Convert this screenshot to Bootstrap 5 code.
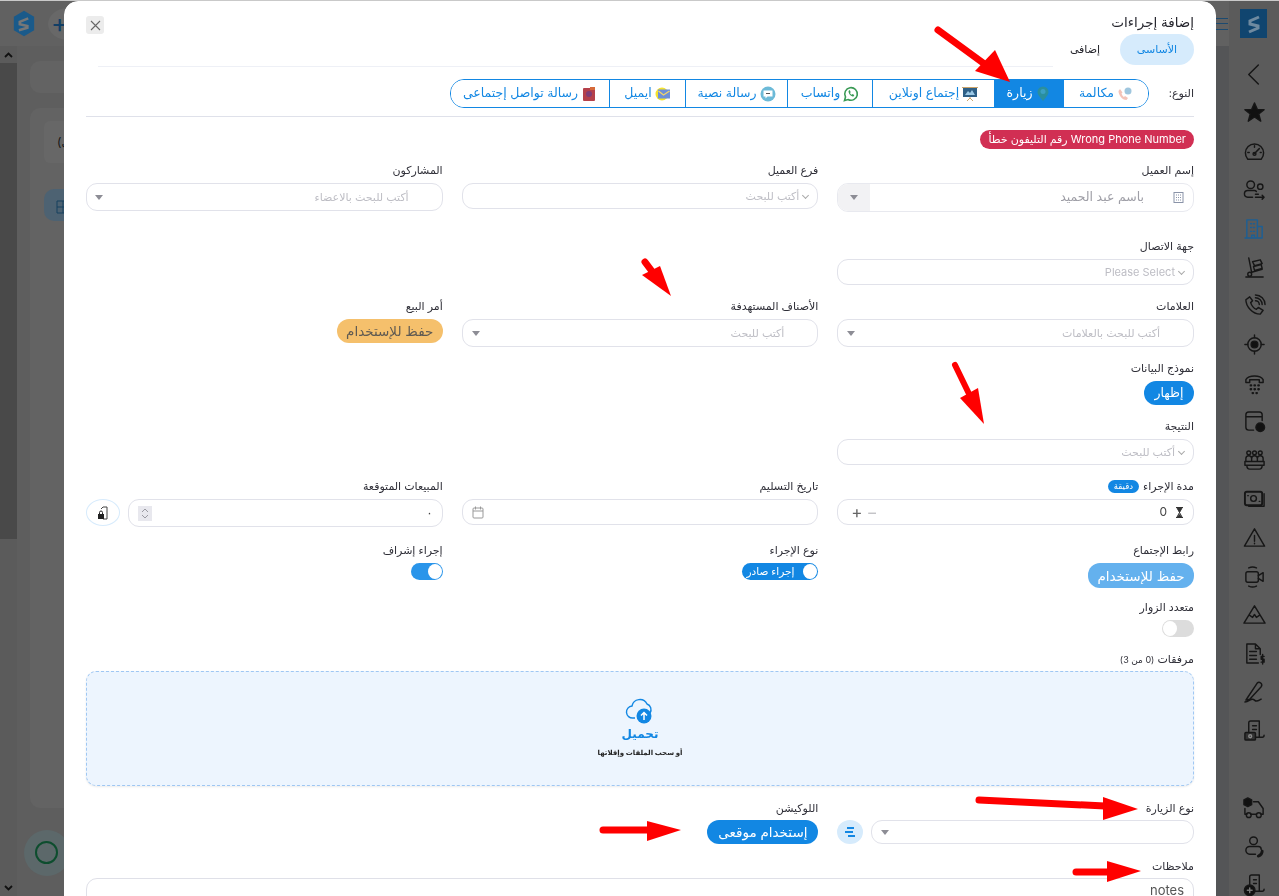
<!DOCTYPE html>
<html lang="ar" dir="rtl">
<head>
    <meta charset="UTF-8">
    <meta name="viewport" content="width=device-width, initial-scale=1.0">
    <title>إضافة إجراءات</title>
    <link href="https://cdn.jsdelivr.net/npm/bootstrap@5.3.3/dist/css/bootstrap.min.css" rel="stylesheet">
    <style>
        body { overflow: hidden; height: 896px; background: #5b5b5b; border-top: 1px solid #c9c9c9; font-family: "Inter", "DejaVu Sans", sans-serif; font-size: 11px; color: #2f2f38; }

        /* dimmed page behind the dialog */
        .page-shell { height: 895px; }
        .rail { width: 50px; flex: none; background: #5b5b5b; padding-top: 8px; }
        .rail-logo { width: 27px; height: 29px; background: #10456f; margin: 0 12px 17px 11px; }
        .rail-item { height: 38.6px; }
        .rail-item svg { width: 23px; height: 23px; fill: none; stroke: #161616; stroke-width: 1.5; stroke-linecap: round; stroke-linejoin: round; }
        .bg-main { flex: 1; min-width: 0; background: #5e5e5e; }
        .bg-head { height: 45px; background: #616161; padding-left: 13px; gap: 13px; }
        .bg-burger { position: absolute; left: 1216px; top: 18px; width: 12px; height: 12px; border-top: 1px solid #1c4a70; border-bottom: 1px solid #1c4a70; }
        .bg-burger::after { content: ""; display: block; height: 1px; margin-top: 4px; background: #1c4a70; }
        .bg-plus { width: 40px; height: 32px; border-radius: 50%; background: #686868; color: #123f66; font-size: 26px; line-height: 30px; padding-left: 3px; }
        .scroll-strip { width: 17px; flex: none; background: #5b5b5b; height: 850px; }
        .scroll-thumb { height: 476px; background: #494949; }
        .scroll-ch { height: 17px; }
        .bg-gutter { width: 13px; flex: none; background: #545557; }
        .bg-card { background: #636363; border-radius: 10px; margin: 15px 0 8px 13px; height: 32px; }
        .bg-card-b { height: 700px; padding: 13px 0 0 14px; }
        .bg-inner { height: 42px; border-radius: 6px 0 0 6px; background: #676767; color: #151515; font-size: 12px; padding: 12px 0 0 13px; }
        .bg-grid { width: 40px; height: 32px; margin-top: 26px; border-radius: 10px; background: #4d6272; padding: 9px 0 0 12px; }
        .bg-fab { position: absolute; left: 24px; top: 830px; width: 46px; height: 46px; border-radius: 50%; background: #5c686a; }
        .bg-fab::after { content: ""; position: absolute; left: 11px; top: 11px; width: 23px; height: 23px; border-radius: 50%; border: 2.5px solid #0d4d2e; }

        /* dialog */
        .dlg-layer { position: fixed; left: 64px; top: 1px; width: 1152px; height: 895px; z-index: 1055; overflow: hidden; border-radius: 14px 14px 0 0; }
        .act-content { height: 960px; border: 0; border-radius: 14px; padding: 11px 22px 0; overflow: hidden; background: #fff; }
        .act-title { font-size: 13.5px; font-weight: 500; line-height: 20px; color: #26262e; height: 22px; }
        .act-close { width: 18px; height: 18px; background: #ececec; border-radius: 3px; margin-top: 4px; color: #555; }
        .act-tabs { height: 32px; gap: 0; border-bottom: 0; padding-right: 0; }
        .act-tabs .nav-link { padding: 0 0; height: 31px; line-height: 31px; border-radius: 16px; font-size: 11px; color: #25252c; width: 74px; text-align: center; border: 0; }
        .act-tabs .nav-link.active { background: #d6ebfc; color: #1287e3; }
        .act-tabs .nav-link.second { width: 70px; }
        .act-rule { height: 1px; background: #eef0f6; margin: 0 141px 0 12px; }
        .type-row { height: 29px; margin-top: 12px; }
        .type-label { width: 45px; font-size: 11px; }
        .type-group { width: 699px; height: 29px; border: 1px solid #1287e3; border-radius: 14px; overflow: hidden; }
        .type-btn { height: 100%; font-size: 12.5px; line-height: 1; color: #1287e3; background: #fff; border: 0; border-left: 1px solid #1287e3; gap: 3px; padding: 0; border-radius: 0; }
        .type-btn:last-child { border-left: 0; }
        .type-btn.on { background: #1287e3; color: #fff; }
        .type-btn svg { width: 16px; height: 16px; flex: none; }
        .w-85 { width: 85px; } .w-69 { width: 69px; } .w-122 { width: 122px; } .w-102 { width: 102px; } .w-76 { width: 76px; } .w-fill { flex: 1; }
        .type-rule { height: 1px; background: #dfe1ea; margin-top: 8px; }
        .warn-pill { height: 19px; line-height: 19px; padding: 0 8px; margin-top: 13px; margin-bottom: 13px; border-radius: 10px; background: #d12f53; color: #fff; font-size: 11px; }

        .fld-row { --bs-gutter-x: 19px; margin-bottom: 13px; }
        .fld-row.gap-26 { margin-bottom: 26px; }
        .fld-row.gap-14 { margin-bottom: 14px; }
        .fld-row.gap-15 { margin-bottom: 15px; }
        .fld-row.gap-11 { margin-bottom: 11px; }
        .fld-label { display: block; height: 16px; line-height: 16px; margin-bottom: 5px; font-size: 11px; color: #2f2f38; white-space: nowrap; }
        .fld-label.tight { margin-bottom: 4px; }
        .att-count { font-size: 9px; }
        .fld-box { height: 26px; padding: 0 9px; border: 1px solid #e1e2ea; border-radius: 11px; background: #fff; color: #bdbdc4; font-size: 11px; }
        .h-24 { height: 24px; } .h-28 { height: 28px; }
        .caret-down { width: 0; height: 0; border: 4px solid transparent; border-top: 5px solid #8d8d95; border-bottom: 0; }
        .chev-down { width: 5px; height: 5px; border-left: 1px solid #aaa; border-bottom: 1px solid #aaa; transform: rotate(-45deg); margin-bottom: 2px; flex: none; }
        .client-box { height: 29px; border: 1px solid #e8e9ef; border-radius: 11px; overflow: hidden; color: #9e9ea6; font-size: 12.5px; }
        .client-end { width: 32px; background: #f2f2f4; }
        .pill-btn { height: 24px; line-height: 24px; padding: 0; border: 0; border-radius: 12px; font-size: 13.5px; }
        .pill-amber { width: 106px; background: #f5c06c; color: #5f5a52; }
        .pill-blue { background: #1287e3; color: #fff; }
        .pill-pale { width: 106px; height: 25px; background: #64b1ee; color: #fff; }
        .w-50px { width: 50px; font-size: 12.5px; } .w-111 { width: 111px; }
        .unit-badge { height: 13px; line-height: 13px; padding: 0 6px; border-radius: 7px; background: #1287e3; color: #fff; font-size: 8.5px; font-weight: 400; }
        .dur-value { color: #444; font-size: 12px; }
        .step-sign { font-size: 17px; line-height: 1; color: #666; }
        .step-sign.off { color: #c4c4c8; }
        .spin-box { width: 14px; height: 15px; background: #e8e8ee; color: #9a9aa2; flex: none; }
        .lock-btn { width: 34px; height: 27px; flex: none; border: 1px solid #d7ebfc; border-radius: 50%; background: #fff; padding: 0; }
        .sw-track { height: 17px; border-radius: 9px; padding: 0; border: 0; display: flex; }
        .sw-knob { width: 14px; height: 15px; margin: 1px; border-radius: 50%; background: #fff; flex: none; }
        .sw-on { width: 32px; background: #2a95ea; }
        .sw-off { width: 32px; background: #dcdcdc; justify-content: flex-end; }
        .sw-wide { width: 76px; background: #1287e3; color: #fff; font-size: 10.5px; line-height: 17px; gap: 8px; }
        .drop-zone { height: 115px; margin-bottom: 14px; border: 1px dashed #9fc7f3; border-radius: 10px; background: #edf5fe; box-shadow: 0 1px 2px rgba(0,0,0,.08); }
        .drop-title { font-size: 12px; font-weight: 700; color: #1287e3; line-height: 16px; margin-top: 2px; }
        .drop-sub { font-size: 7px; font-weight: 700; color: #222; line-height: 12px; margin-top: 5px; }
        .round-btn { width: 26px; height: 24px; flex: none; border: 0; padding: 0; border-radius: 50%; background: #d6ebfc; }
        .notes-box { height: 50px; padding: 2px 9px; border: 1px solid #dfe0e8; border-radius: 11px; font-size: 13px; color: #555; width: 100%; resize: none; outline: 0; font-family: inherit; display: block; }
        .arrow-layer { position: absolute; left: 0; top: 0; pointer-events: none; }
    </style>
</head>
<body>
    <div class="page-shell d-flex">
        <aside class="rail">
            <div class="rail-logo d-flex align-items-center justify-content-center">
                <svg width="14" height="20" viewBox="0 0 14 20"><path d="M12 3 3 7v3l8 2v2l-9 4" fill="none" stroke="#6f8aa0" stroke-width="3"/></svg>
            </div>
            <div class="rail-item d-flex align-items-center justify-content-center"><svg viewBox="0 0 24 24"><path d="M16 2 6 12l10 10"/></svg></div>
            <div class="rail-item d-flex align-items-center justify-content-center"><svg viewBox="0 0 24 24"><path fill="#111" d="m12 2 3 7h7l-5.600 4.500 2.100 7.500-6.500-4.300-6.500 4.300 2.100-7.500L2 9h7z"/></svg></div>
            <div class="rail-item d-flex align-items-center justify-content-center"><svg viewBox="0 0 24 24"><path d="M5 20a9.500 9.500 0 1 1 14 0z"/><path d="m12 14 5-5M5 13h1.500M12 6v1.500M18 13h1"/><circle cx="12" cy="14.500" r="1.500"/></svg></div>
            <div class="rail-item d-flex align-items-center justify-content-center"><svg viewBox="0 0 24 24"><circle cx="8" cy="6" r="4"/><circle cx="18" cy="8" r="2.800"/><path d="M10 19H5a3 3 0 0 1 0-7h7a3 3 0 0 1 2 1M13 19h9m-2-2 2 2-2 2m-4-5h-3"/></svg></div>
            <div class="rail-item d-flex align-items-center justify-content-center"><svg viewBox="0 0 24 24"><path stroke="#1d5f94" d="M4 22V3h11v19M15 10h5v12H2M8 7h1M11 7h1M8 11h1M11 11h1M8 15h1M11 15h1M9 22v-3h3v3"/></svg></div>
            <div class="rail-item d-flex align-items-center justify-content-center"><svg viewBox="0 0 24 24"><path d="M6 2l3 15M3 22h18M9 17l11-3M10 6l8-2 2 4-8 2zM11 11l8-2 1 4-8 2z"/><circle cx="7" cy="19" r="2"/></svg></div>
            <div class="rail-item d-flex align-items-center justify-content-center"><svg viewBox="0 0 24 24"><path d="M7 3 3 6c0 7 7 15 15 15l3-4-5-3-2 2c-3-1-5-4-6-7l2-2zM13 7a4 4 0 0 1 4 4M13 4a7 7 0 0 1 7 7M13 1a10 10 0 0 1 10 10"/></svg></div>
            <div class="rail-item d-flex align-items-center justify-content-center"><svg viewBox="0 0 24 24"><circle cx="12" cy="12" r="7"/><circle cx="12" cy="12" r="3.500" fill="#111"/><path d="M12 2v3M12 19v3M2 12h3M19 12h3"/></svg></div>
            <div class="rail-item d-flex align-items-center justify-content-center"><svg viewBox="0 0 24 24"><path d="M3 11V8c3-5 15-5 18 0v3h-4V8H7v3z"/><path stroke-width="2.400" d="M8 14h.5M12 14h.5M16 14h.5M8 18h.5M12 18h.5M16 18h.5M10 22h.5M14 22h.5"/></svg></div>
            <div class="rail-item d-flex align-items-center justify-content-center"><svg viewBox="0 0 24 24"><path d="M11 21H6a3 3 0 0 1-3-3V5a3 3 0 0 1 3-3h11a3 3 0 0 1 3 3v6M3 7h17"/><circle cx="18" cy="18" r="4.500" fill="#111"/></svg></div>
            <div class="rail-item d-flex align-items-center justify-content-center"><svg viewBox="0 0 24 24"><circle cx="6" cy="4" r="2"/><circle cx="12" cy="4" r="2"/><circle cx="18" cy="4" r="2"/><path d="M3 12v-2a2 2 0 0 1 6 0v2M9 10a3 3 0 0 1 6 0v2M15 10a3 3 0 0 1 6 0v2M2 13h20v4H2zM4 17c0 3 1 4 3 4h10c2 0 3-1 3-4"/></svg></div>
            <div class="rail-item d-flex align-items-center justify-content-center"><svg viewBox="0 0 24 24"><rect x="2" y="5" width="18" height="14" rx="2" stroke-width="2"/><circle cx="11" cy="12" r="3"/><path d="M22 7v13H6M5 9h.5M17 15h.5"/></svg></div>
            <div class="rail-item d-flex align-items-center justify-content-center"><svg viewBox="0 0 24 24"><path d="M12 3 1.500 21h21zM12 10v6M12 18v.5"/></svg></div>
            <div class="rail-item d-flex align-items-center justify-content-center"><svg viewBox="0 0 24 24"><rect x="3" y="7" width="13" height="11" rx="2"/><path d="m16 11 5-3v9l-5-3M6 3c2-1 6-1 8 0M6 22c2 1 6 1 8 0"/></svg></div>
            <div class="rail-item d-flex align-items-center justify-content-center"><svg viewBox="0 0 24 24"><path d="M1 21 12 3l11 18zM7 13l3 2 2-3 2 3 3-2"/></svg></div>
            <div class="rail-item d-flex align-items-center justify-content-center"><svg viewBox="0 0 24 24"><path d="M16 22H4V2h9l5 5v6M13 2v5h5M7 10h7M7 14h7M7 18h7"/><path d="M22 15h-3v3h3v3h-3M20.500 13v10"/></svg></div>
            <div class="rail-item d-flex align-items-center justify-content-center"><svg viewBox="0 0 24 24"><path d="M5 18 3 21l4-1L19 7c2-3-2-6-4-4zM2 23c4 0 5-3 8-3 2 0 2 2 4 2s3-1 5-2"/></svg></div>
            <div class="rail-item d-flex align-items-center justify-content-center"><svg viewBox="0 0 24 24"><path d="M6 13V4a2 2 0 0 1 2-2h9v17h3a2 2 0 0 0 2-2M10 7h4M10 11h4M17 19h-4"/><rect x="2" y="14" width="11" height="8" rx="1" fill="#333"/><circle cx="7.500" cy="18" r="1.500" stroke="#888"/></svg></div>
            <div class="rail-item"></div>
            <div class="rail-item d-flex align-items-center justify-content-center"><svg viewBox="0 0 24 24"><path d="M5 2 1 4v5l4 2 4-2V4z" fill="#111"/><path d="M11 6h5l5 7v6h-2M2 13v6h2M8 19h6"/><circle cx="6" cy="20" r="2.500"/><circle cx="16.500" cy="20" r="2.500"/></svg></div>
            <div class="rail-item d-flex align-items-center justify-content-center"><svg viewBox="0 0 24 24"><circle cx="11" cy="6" r="4"/><path d="M13 20H7a4 4 0 0 1 0-8h9a3 3 0 0 1 3 3"/><path stroke-width="3" d="M20 17c0 2-1 4-4 5"/></svg></div>
            <div class="rail-item d-flex align-items-center justify-content-center"><svg viewBox="0 0 24 24"><path d="M7 12V4a2 2 0 0 1 2-2h8v17h3a2 2 0 0 0 2-2M11 7h3M11 11h3M17 19h-5"/><circle cx="7" cy="18" r="5.500" fill="#111"/><path stroke="#777" d="M7 15.500v5M4.500 18h5"/></svg></div>
        </aside>
        <main class="bg-main" dir="ltr">
            <div class="bg-head d-flex align-items-center">
                <svg width="22" height="29" viewBox="0 0 26 30"><path d="M13 0 25 7v16l-12 7-12-7V7z" fill="#1a5a8a"/><path d="M18 9 8 13v3l9 2v2l-10 3" fill="none" stroke="#777" stroke-width="3"/></svg>
                <div class="bg-plus">+</div>
            </div>
            <div class="d-flex">
                <div class="scroll-strip d-flex flex-column">
                    <div class="scroll-ch d-flex align-items-center justify-content-center"><svg width="9" height="6" viewBox="0 0 9 6"><path d="m1 5 3.500-3.500L8 5" fill="none" stroke="#111" stroke-width="1.800"/></svg></div>
                    <div class="scroll-thumb"></div>
                    <div class="scroll-ch mt-auto d-flex align-items-center justify-content-center"><svg width="9" height="6" viewBox="0 0 9 6"><path d="m1 1 3.500 3.500L8 1" fill="none" stroke="#111" stroke-width="1.800"/></svg></div>
                </div>
                <div class="flex-grow-1">
                    <div class="bg-card"></div>
                    <div class="bg-card bg-card-b">
                        <div class="bg-inner">(ى</div>
                        <div class="bg-grid"><svg width="14" height="14" viewBox="0 0 14 14"><path d="M1 1h12v12H1zM7 1v12M1 7h12" fill="none" stroke="#16405f"/></svg></div>
                    </div>
                </div>
                <div class="bg-gutter"></div>
            </div>
        </main>
    </div>
    <div class="bg-burger"></div>
    <div class="bg-fab"></div>

    <div class="dlg-layer">
            <div class="modal-content act-content position-relative">
                <div class="d-flex justify-content-between align-items-start act-title">
                    <span>إضافة إجراءات</span>
                    <div class="act-close d-flex align-items-center justify-content-center">
                        <svg width="11" height="11" viewBox="0 0 11 11"><path d="m1 1 9 9M10 1l-9 9" stroke="#666" stroke-width="1.100"/></svg>
                    </div>
                </div>
                <ul class="nav nav-pills act-tabs">
                    <li class="nav-item"><a class="nav-link active" href="#">الأساسى</a></li>
                    <li class="nav-item"><a class="nav-link second" href="#">إضافى</a></li>
                </ul>
                <div class="act-rule"></div>

                <div class="d-flex align-items-center type-row">
                    <div class="type-label">النوع:</div>
                    <div class="d-flex type-group">
                        <button class="btn type-btn w-85 d-flex align-items-center justify-content-center">
                            <svg viewBox="0 0 16 16"><path d="M3 3 1.500 5c0 4 3.500 9 8 9l1.500-2-3-2-1 1c-1-.5-2-2-2.500-3.500l1-1z" fill="#f4c3b8"/><circle cx="11" cy="5" r="3.500" fill="#9fc6de"/></svg>
                            مكالمة
                        </button>
                        <button class="btn type-btn on w-69 d-flex align-items-center justify-content-center">
                            <svg viewBox="0 0 16 16"><path d="M8 15C4 10 2.500 8 2.500 6a5.500 5.500 0 0 1 11 0c0 2-1.500 4-5.500 9z" fill="#2a8f9e"/><circle cx="8" cy="5.500" r="2.500" fill="#3aa0c4"/></svg>
                            زيارة
                        </button>
                        <button class="btn type-btn w-122 d-flex align-items-center justify-content-center">
                            <svg viewBox="0 0 16 16"><rect x="1" y="2" width="14" height="9" fill="#2e5f86"/><path d="m3 9 3-4 2 2 2-3 3 5z" fill="#9cc9e6"/><path d="M0 1.500h16M8 11v2M5 15l3-3 3 3" stroke="#c9a36a" fill="none"/></svg>
                            إجتماع اونلاين
                        </button>
                        <button class="btn type-btn w-85 d-flex align-items-center justify-content-center">
                            <svg viewBox="0 0 16 16"><path d="M1.500 14.500 2.500 11a6.300 6.300 0 1 1 2.500 2.500z" fill="none" stroke="#3a9a55" stroke-width="1.600"/><path d="M5.500 5c0 3 2.500 5.500 5 5.500l.8-1.500-1.800-.9-.7.700c-.8-.4-1.400-1-1.800-1.900l.7-.7L6.800 4z" fill="#3a9a55"/></svg>
                            واتساب
                        </button>
                        <button class="btn type-btn w-102 d-flex align-items-center justify-content-center">
                            <svg viewBox="0 0 16 16"><circle cx="8" cy="8" r="7.500" fill="#6cbad8"/><path d="M3.500 4.500h9v6h-5l-2 2v-2h-2z" fill="#fff"/><path d="M6 7.500h4" stroke="#555"/></svg>
                            رسالة نصية
                        </button>
                        <button class="btn type-btn w-76 d-flex align-items-center justify-content-center">
                            <svg viewBox="0 0 16 16"><circle cx="7" cy="8" r="6.500" fill="#f4e22c"/><rect x="3" y="3.500" width="12" height="9" fill="#6d8fd8"/><path d="m3.500 5 5 4 6-4" fill="none" stroke="#f3d56a" stroke-width="1.300"/></svg>
                            ايميل
                        </button>
                        <button class="btn type-btn w-fill d-flex align-items-center justify-content-center">
                            <svg viewBox="0 0 16 16"><rect x="2" y="2" width="12" height="13" rx="1" fill="#b5404a"/><circle cx="8" cy="8" r="3" fill="#7f3d76"/><rect x="9" y="1" width="5" height="3" fill="#d66a3a"/></svg>
                            رسالة تواصل إجتماعى
                        </button>
                    </div>
                </div>
                <div class="type-rule"></div>

                <div class="d-flex"><span class="warn-pill">Wrong Phone Number رقم التليفون خطأ</span></div>

                <div class="row fld-row gap-26">
                    <div class="col-4">
                        <label class="fld-label">إسم العميل</label>
                        <div class="client-box d-flex align-items-center">
                            <div class="flex-grow-1 d-flex align-items-center px-2">
                                <svg width="13" height="13" viewBox="0 0 13 13"><rect x="2" y="1.500" width="9" height="10" fill="none" stroke="#8a93a8"/><path d="M4 4h1M6 4h1M8 4h1M4 6.500h1M6 6.500h1M8 6.500h1M4 9h1M6 9h1M8 9h1" stroke="#8a93a8"/></svg>
                                <span class="me-4 pe-1">باسم عبد الحميد</span>
                            </div>
                            <div class="client-end h-100 d-flex align-items-center justify-content-center"><span class="caret-down"></span></div>
                        </div>
                    </div>
                    <div class="col-4">
                        <label class="fld-label">فرع العميل</label>
                        <div class="fld-box d-flex align-items-center gap-1"><span class="chev-down"></span><span>أكتب للبحث</span></div>
                    </div>
                    <div class="col-4">
                        <label class="fld-label">المشاركون</label>
                        <div class="fld-box h-28 d-flex align-items-center justify-content-between ps-2">
                            <span class="pe-4">أكتب للبحث بالاعضاء</span><span class="caret-down"></span>
                        </div>
                    </div>
                </div>

                <div class="row fld-row">
                    <div class="col-4">
                        <label class="fld-label">جهة الاتصال</label>
                        <div class="fld-box d-flex align-items-center gap-1"><span class="chev-down"></span><span>Please Select</span></div>
                    </div>
                </div>

                <div class="row fld-row">
                    <div class="col-4">
                        <label class="fld-label">العلامات</label>
                        <div class="fld-box h-28 d-flex align-items-center justify-content-between">
                            <span class="pe-4">أكتب للبحث بالعلامات</span><span class="caret-down"></span>
                        </div>
                    </div>
                    <div class="col-4">
                        <label class="fld-label">الأصناف المستهدفة</label>
                        <div class="fld-box h-28 d-flex align-items-center justify-content-between">
                            <span class="pe-4">أكتب للبحث</span><span class="caret-down"></span>
                        </div>
                    </div>
                    <div class="col-4">
                        <label class="fld-label">أمر البيع</label>
                        <button class="btn pill-btn pill-amber">حفظ للإستخدام</button>
                    </div>
                </div>

                <div class="row fld-row">
                    <div class="col-4">
                        <label class="fld-label">نموذج البيانات</label>
                        <button class="btn pill-btn pill-blue w-50px">إظهار</button>
                    </div>
                </div>

                <div class="row fld-row">
                    <div class="col-4">
                        <label class="fld-label">النتيجة</label>
                        <div class="fld-box d-flex align-items-center gap-1"><span class="chev-down"></span><span>أكتب للبحث</span></div>
                    </div>
                </div>

                <div class="row fld-row gap-15">
                    <div class="col-4">
                        <label class="fld-label d-flex align-items-center gap-1">مدة الإجراء <span class="unit-badge">دقيقة</span></label>
                        <div class="fld-box d-flex align-items-center justify-content-between">
                            <span class="d-flex align-items-center gap-2">
                                <svg width="9" height="11" viewBox="0 0 9 11"><path d="M1 .5h7M1 10.500h7M2 1l5 9M7 1l-5 9" stroke="#333" fill="none"/><path d="M2 1h5L4.500 5.500zM4.500 7 7 10H2z" fill="#333"/></svg>
                                <span class="dur-value">0</span>
                            </span>
                            <span class="d-flex align-items-center gap-1 ms-1"><span class="step-sign off">−</span><span class="step-sign">+</span></span>
                        </div>
                    </div>
                    <div class="col-4">
                        <label class="fld-label">تاريخ التسليم</label>
                        <div class="fld-box d-flex align-items-center justify-content-end">
                            <svg width="12" height="13" viewBox="0 0 12 13"><rect x="1" y="2" width="10" height="10" rx="1" fill="none" stroke="#999"/><path d="M1 5h10M3.500 .5v3M8.500 .5v3" stroke="#999" fill="none"/></svg>
                        </div>
                    </div>
                    <div class="col-4">
                        <label class="fld-label">المبيعات المتوقعة</label>
                        <div class="d-flex gap-2 align-items-start">
                            <div class="fld-box h-28 flex-grow-1 d-flex align-items-center justify-content-between">
                                <span class="dur-value">٠</span>
                                <span class="spin-box d-flex align-items-center justify-content-center">
                                    <svg width="8" height="13" viewBox="0 0 8 13"><path d="m1 5 3-3 3 3M1 8l3 3 3-3" fill="none" stroke="#9a9aa2"/></svg>
                                </span>
                            </div>
                            <button class="btn lock-btn d-flex align-items-center justify-content-center">
                                <svg width="12" height="14" viewBox="0 0 12 14"><path d="M4 3 6 1h4v12H6" fill="none" stroke="#444"/><rect x="1" y="8" width="6" height="5" fill="#222"/><path d="M2.500 8V6.500a1.500 1.500 0 0 1 3 0V8" fill="none" stroke="#222"/></svg>
                            </button>
                        </div>
                    </div>
                </div>

                <div class="row fld-row gap-11">
                    <div class="col-4">
                        <label class="fld-label">رابط الإجتماع</label>
                        <button class="btn pill-btn pill-pale">حفظ للإستخدام</button>
                    </div>
                    <div class="col-4">
                        <label class="fld-label">نوع الإجراء</label>
                        <div class="sw-track sw-wide"><span class="sw-knob"></span><span>إجراء صادر</span></div>
                    </div>
                    <div class="col-4">
                        <label class="fld-label">إجراء إشراف</label>
                        <div class="sw-track sw-on"><span class="sw-knob"></span></div>
                    </div>
                </div>

                <div class="row fld-row gap-14">
                    <div class="col-4">
                        <label class="fld-label">متعدد الزوار</label>
                        <div class="sw-track sw-off"><span class="sw-knob"></span></div>
                    </div>
                </div>

                <label class="fld-label tight">مرفقات <span class="att-count">(0 من 3)</span></label>
                <div class="drop-zone d-flex flex-column align-items-center justify-content-center">
                    <svg width="30" height="26" viewBox="0 0 30 26"><path d="M10 20H8a6 6 0 0 1-1-12 8 8 0 0 1 15-2 6 6 0 0 1 3 9" fill="none" stroke="#1287e3" stroke-width="1.400"/><circle cx="19" cy="18" r="7.500" fill="#1287e3"/><path d="M19 22v-7M16 17.500l3-3 3 3" fill="none" stroke="#fff" stroke-width="1.500"/></svg>
                    <div class="drop-title">تحميل</div>
                    <div class="drop-sub">أو سحب الملفات وإفلاتها</div>
                </div>

                <div class="row fld-row gap-14">
                    <div class="col-4">
                        <label class="fld-label tight">نوع الزيارة</label>
                        <div class="d-flex align-items-center gap-2">
                            <div class="fld-box h-24 flex-grow-1 d-flex align-items-center justify-content-end"><span class="caret-down"></span></div>
                            <button class="btn round-btn d-flex align-items-center justify-content-center">
                                <svg width="11" height="10" viewBox="0 0 11 10"><path d="M2 1h7M0 5h8M3 9h7" stroke="#1287e3" stroke-width="2"/></svg>
                            </button>
                        </div>
                    </div>
                    <div class="col-4">
                        <label class="fld-label tight">اللوكيشن</label>
                        <button class="btn pill-btn pill-blue w-111">إستخدام موقعى</button>
                    </div>
                </div>

                <label class="fld-label tight">ملاحظات</label>
                <textarea class="notes-box">notes</textarea>

                <svg class="arrow-layer" width="1152" height="896" viewBox="0 0 1152 896" fill="#f00">
                    <g transform="translate(-64 -1)">
                        <path d="M938 30 990 68" stroke="#f00" stroke-width="7" stroke-linecap="round"/><path d="M1010 82 975 71 995 50z"/>
                        <path d="M645 262 660 282" stroke="#f00" stroke-width="7" stroke-linecap="round"/><path d="M671 296 642 275 660 266z"/>
                        <path d="M955 365 972 400" stroke="#f00" stroke-width="6" stroke-linecap="round"/><path d="M984 424 960 398 978 388z"/>
                        <path d="M979 800 1105 806" stroke="#f00" stroke-width="7" stroke-linecap="round"/><path d="M1138 809 1103 797 1103 820z"/>
                        <path d="M603 830 648 830" stroke="#f00" stroke-width="7" stroke-linecap="round"/><path d="M681 830 647 821 647 841z"/>
                        <path d="M1076 872 1110 872" stroke="#f00" stroke-width="7" stroke-linecap="round"/><path d="M1141 871 1107 861 1107 882z"/>
                    </g>
                </svg>
            </div>
    </div>

    <script src="https://cdn.jsdelivr.net/npm/bootstrap@5.3.3/dist/js/bootstrap.bundle.min.js"></script>
</body>
</html>
